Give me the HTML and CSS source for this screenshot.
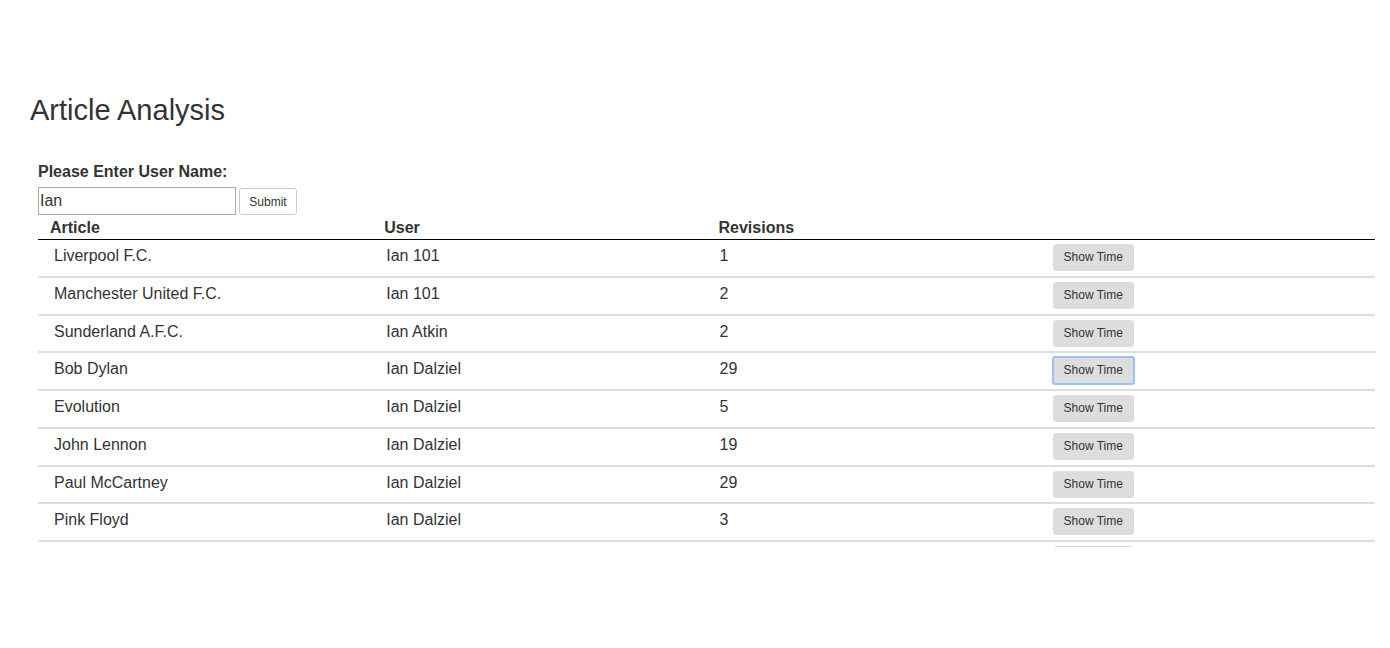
FILE: index.html
```html
<!DOCTYPE html>
<html>
<head>
<meta charset="utf-8">
<title>Article Analysis</title>
<link rel="stylesheet" href="styles.css">
</head>
<body>
<div class="page">
  <h1 class="title">Article Analysis</h1>
  <section class="panel">
    <form class="user-form">
      <label class="label" for="uname">Please Enter User Name:</label>
      <div class="form-row">
        <input id="uname" class="text-input" type="text" value="Ian">
        <button type="button" class="submit-btn">Submit</button>
      </div>
    </form>
    <div class="table">
      <div class="thead">
        <div class="th">Article</div>
        <div class="th">User</div>
        <div class="th">Revisions</div>
        <div class="th"></div>
      </div>
      <div class="tbody">
        <div class="tr"><div class="td">Liverpool F.C.</div><div class="td">Ian 101</div><div class="td">1</div><div class="td"><button class="time-btn">Show Time</button></div></div>
        <div class="tr"><div class="td">Manchester United F.C.</div><div class="td">Ian 101</div><div class="td">2</div><div class="td"><button class="time-btn">Show Time</button></div></div>
        <div class="tr"><div class="td">Sunderland A.F.C.</div><div class="td">Ian Atkin</div><div class="td">2</div><div class="td"><button class="time-btn">Show Time</button></div></div>
        <div class="tr"><div class="td">Bob Dylan</div><div class="td">Ian Dalziel</div><div class="td">29</div><div class="td"><button class="time-btn is-focused">Show Time</button></div></div>
        <div class="tr"><div class="td">Evolution</div><div class="td">Ian Dalziel</div><div class="td">5</div><div class="td"><button class="time-btn">Show Time</button></div></div>
        <div class="tr"><div class="td">John Lennon</div><div class="td">Ian Dalziel</div><div class="td">19</div><div class="td"><button class="time-btn">Show Time</button></div></div>
        <div class="tr"><div class="td">Paul McCartney</div><div class="td">Ian Dalziel</div><div class="td">29</div><div class="td"><button class="time-btn">Show Time</button></div></div>
        <div class="tr"><div class="td">Pink Floyd</div><div class="td">Ian Dalziel</div><div class="td">3</div><div class="td"><button class="time-btn">Show Time</button></div></div>
        <div class="tr"><div class="td"></div><div class="td"></div><div class="td"></div><div class="td"><button class="time-btn" aria-label="Show Time"></button></div></div>
      </div>
    </div>
  </section>
</div>
</body>
</html>
```

FILE: styles.css
```css
html, body {
  margin: 0;
  padding: 0;
  background: #fff;
}

body {
  font-family: "Liberation Sans", Arial, sans-serif;
  color: #333;
  font-size: 16px;
}

.page {
  padding: 94px 15px 0 30px;
}

.title {
  margin: 0;
  font-size: 29px;
  line-height: 33px;
  font-weight: normal;
  color: #333;
}

.panel {
  margin: 33px 0 0 8px;
}

.user-form {
  margin: 0;
}

.label {
  display: block;
  font-weight: bold;
  font-size: 16px;
  line-height: 23px;
}

.form-row {
  display: flex;
  align-items: flex-start;
  margin-top: 4px;
}

.text-input {
  box-sizing: border-box;
  width: 198px;
  height: 28px;
  margin: 0;
  padding: 0 1px;
  border: 1px solid #a9a9a9;
  font-family: "Liberation Sans", Arial, sans-serif;
  font-size: 16px;
  color: #333;
  outline: none;
}

.submit-btn {
  box-sizing: border-box;
  margin: 1px 0 0 3px;
  height: 27px;
  width: 58px;
  padding: 0;
  background: #fff;
  border: 1px solid #ccc;
  border-radius: 3px;
  font-family: "Liberation Sans", Arial, sans-serif;
  font-size: 12px;
  color: #333;
}

.table {
  margin-top: 1px;
}

.thead {
  display: grid;
  grid-template-columns: 1fr 1fr 1fr 1fr;
  border-bottom: 1px solid #000;
}

.th {
  font-weight: bold;
  font-size: 16px;
  line-height: 23px;
  padding-left: 12px;
}

.tbody {
  height: 307px;
  overflow: hidden;
}

.tr {
  display: grid;
  grid-template-columns: 1fr 1fr 1fr 1fr;
  height: 35.75px;
  border-bottom: 2px solid #ddd;
}

.td {
  padding-top: 4px;
  font-size: 16px;
  line-height: 23px;
}

.td:nth-child(1) { padding-left: 16px; }
.td:nth-child(2) { padding-left: 14px; }
.td:nth-child(3) { padding-left: 13px; }
.td:nth-child(4) { padding-left: 12px; }

.time-btn {
  box-sizing: border-box;
  width: 81px;
  height: 27px;
  margin: 0;
  padding: 0;
  background: #ddd;
  border: 1px solid #ddd;
  border-radius: 3px;
  font-family: "Liberation Sans", Arial, sans-serif;
  font-size: 12px;
  line-height: 17px;
  color: #333;
  vertical-align: top;
}

.time-btn.is-focused {
  border-color: #9fc0f5;
  box-shadow: 0 0 0 1px #9fc0f5;
  border-radius: 2px;
}
```
